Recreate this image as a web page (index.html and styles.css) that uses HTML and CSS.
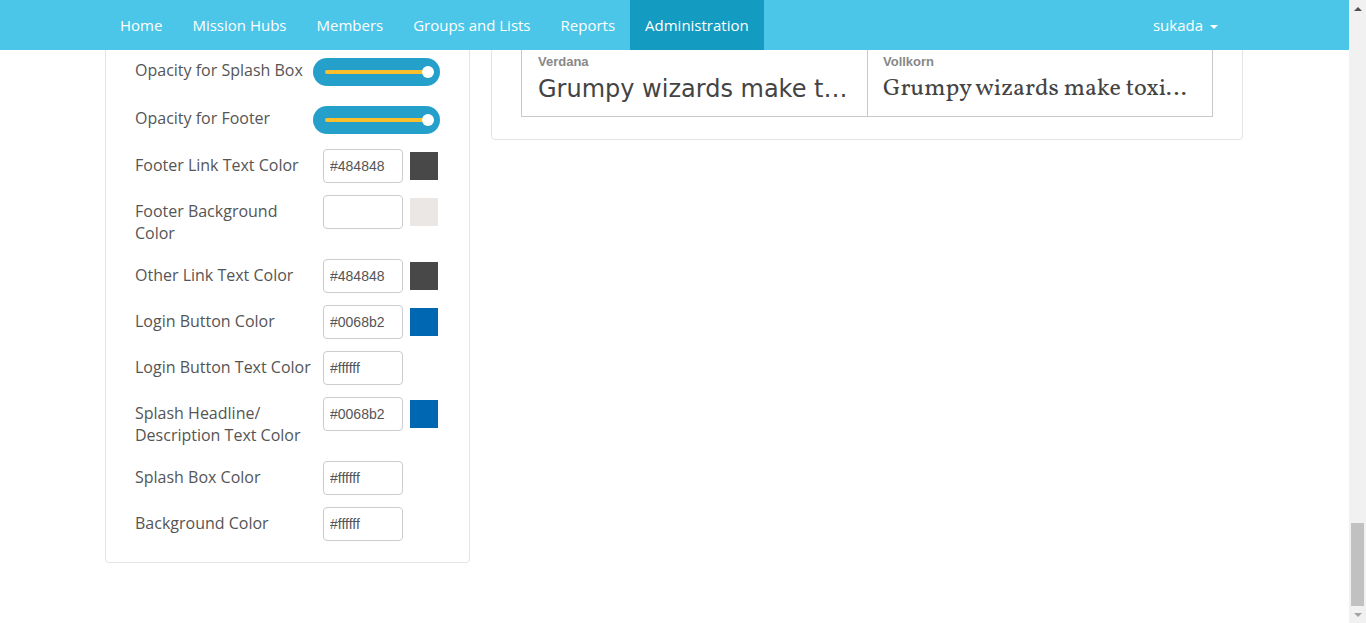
FILE: index.html
```html
<!DOCTYPE html>
<html lang="en">
<head>
<meta charset="utf-8">
<title>Administration</title>
<link rel="stylesheet" href="styles.css">
</head>
<body>
<div class="window">
  <div class="viewport">
    <nav class="navbar">
      <div class="nav-inner">
        <ul class="nav-links">
          <li><a href="#">Home</a></li>
          <li><a href="#">Mission Hubs</a></li>
          <li><a href="#">Members</a></li>
          <li><a href="#">Groups and Lists</a></li>
          <li><a href="#">Reports</a></li>
          <li class="active"><a href="#">Administration</a></li>
        </ul>
        <div class="nav-user"><a href="#">sukada<span class="caret"></span></a></div>
      </div>
    </nav>
    <main class="page">
      <div class="layout">
        <section class="panel panel-settings">
          <div class="settings-above"></div>
          <div class="sliders">
            <div class="slider-row">
              <span class="field-label field-label-inline">Opacity for Splash Box</span>
              <div class="slider" role="slider" aria-valuenow="100"><div class="slider-track"><span class="slider-thumb"></span></div></div>
            </div>
            <div class="slider-row">
              <span class="field-label field-label-inline">Opacity for Footer</span>
              <div class="slider" role="slider" aria-valuenow="100"><div class="slider-track"><span class="slider-thumb"></span></div></div>
            </div>
          </div>
          <div class="color-row">
            <label class="field-label">Footer Link Text Color</label>
            <input class="color-input" type="text" value="#484848">
            <span class="swatch" style="background:#484848"></span>
          </div>
          <div class="color-row">
            <label class="field-label">Footer Background Color</label>
            <input class="color-input" type="text" value="">
            <span class="swatch" style="background:#ebe7e4"></span>
          </div>
          <div class="color-row">
            <label class="field-label">Other Link Text Color</label>
            <input class="color-input" type="text" value="#484848">
            <span class="swatch" style="background:#484848"></span>
          </div>
          <div class="color-row">
            <label class="field-label">Login Button Color</label>
            <input class="color-input" type="text" value="#0068b2">
            <span class="swatch" style="background:#0068b2"></span>
          </div>
          <div class="color-row">
            <label class="field-label">Login Button Text Color</label>
            <input class="color-input" type="text" value="#ffffff">
            <span class="swatch" style="background:#ffffff"></span>
          </div>
          <div class="color-row">
            <label class="field-label">Splash Headline/<wbr>Description Text Color</label>
            <input class="color-input" type="text" value="#0068b2">
            <span class="swatch" style="background:#0068b2"></span>
          </div>
          <div class="color-row">
            <label class="field-label">Splash Box Color</label>
            <input class="color-input" type="text" value="#ffffff">
            <span class="swatch" style="background:#ffffff"></span>
          </div>
          <div class="color-row">
            <label class="field-label">Background Color</label>
            <input class="color-input" type="text" value="#ffffff">
            <span class="swatch" style="background:#ffffff"></span>
          </div>
        </section>
        <section class="panel panel-fonts">
          <div class="fonts-above"></div>
          <div class="font-card">
            <div class="font-cell">
              <div class="font-name">Verdana</div>
              <div class="font-sample sample-verdana">Grumpy wizards make toxic brew for the evil Queen and Jack.</div>
            </div>
            <div class="font-cell">
              <div class="font-name">Vollkorn</div>
              <div class="font-sample sample-vollkorn">Grumpy wizards make toxic brew for the evil Queen and Jack.</div>
            </div>
          </div>
        </section>
      </div>
    </main>
  </div>
  <div class="scrollbar" aria-hidden="true">
    <div class="sb-button"><span class="sb-arrow-up"></span></div>
    <div class="sb-track"><div class="sb-thumb"></div></div>
    <div class="sb-button"><span class="sb-arrow-down"></span></div>
  </div>
</div>
</body>
</html>
```
FILE: styles.css
```css
* { box-sizing: border-box; }
html, body { margin: 0; padding: 0; }
body {
  font-family: "Open Sans", "Liberation Sans", sans-serif;
  color: #555;
  background: #fff;
  overflow: hidden;
}

.window {
  display: flex;
  height: 100vh;
}
.viewport {
  position: relative;
  flex: 1;
  min-width: 0;
  height: 100%;
  overflow: hidden;
  display: flex;
  flex-direction: column;
  justify-content: flex-end;
}

/* scrollbar */
.scrollbar {
  width: 17px;
  flex: none;
  background: #f1f1f1;
  display: flex;
  flex-direction: column;
}
.sb-button {
  height: 17px;
  flex: none;
  display: flex;
  align-items: center;
  justify-content: center;
}
.sb-arrow-up {
  width: 0; height: 0;
  border-bottom: 4px solid #505050;
  border-left: 4px solid transparent;
  border-right: 4px solid transparent;
}
.sb-arrow-down {
  width: 0; height: 0;
  border-top: 4px solid #a3a3a3;
  border-left: 4px solid transparent;
  border-right: 4px solid transparent;
}
.sb-track {
  flex: 1;
  display: flex;
  flex-direction: column;
  justify-content: flex-end;
  padding: 0 2px;
}
.sb-thumb {
  height: 83px;
  background: #c1c1c1;
}

/* navbar */
.navbar {
  position: absolute;
  top: 0; left: 0; right: 0;
  height: 50px;
  background: #4bc6e8;
  z-index: 10;
}
.nav-inner {
  width: 1139px;
  margin: 0 auto;
  height: 50px;
  display: flex;
  justify-content: space-between;
}
.nav-links {
  list-style: none;
  margin: 0;
  padding: 0;
  display: flex;
}
.nav-links a,
.nav-user a {
  display: block;
  padding: 0 15px;
  line-height: 50px;
  font-size: 15px;
  color: #fff;
  text-decoration: none;
}
.nav-links .active a { background: #139bc1; }
.nav-user { margin-right: 11px; }
.caret {
  display: inline-block;
  width: 0; height: 0;
  margin-left: 7px;
  vertical-align: middle;
  border-top: 4px solid #fff;
  border-left: 4px solid transparent;
  border-right: 4px solid transparent;
}

/* page */
.page {
  flex: none;
  padding: 0 0 60px;
}
.layout {
  width: 1139px;
  margin: 0 auto;
  display: flex;
  align-items: flex-start;
  gap: 21px;
}
.panel {
  background: #fff;
  border: 1px solid #e4e4e4;
  border-radius: 4px;
}
.panel-settings {
  width: 365px;
  flex: none;
  padding: 0 29px 21px;
}
.panel-fonts {
  width: 752px;
  flex: none;
  padding: 0 29px 22px;
}
.settings-above { height: 120px; }
.fonts-above { height: 104px; }

/* sliders */
.sliders { margin-bottom: 15px; }
.slider-row {
  display: flex;
  align-items: center;
  height: 28px;
  margin-bottom: 20px;
}
.slider-row:last-child { margin-bottom: 0; }
.slider {
  width: 128px;
  height: 28px;
  border-radius: 14px;
  background: #24a0ca;
  padding: 0 12px;
  display: flex;
  align-items: center;
}
.slider-track {
  position: relative;
  flex: 1;
  height: 4px;
  margin-top: -1px;
  border-radius: 2px;
  background: #fbbf2d;
}
.slider-thumb {
  position: absolute;
  right: -6px;
  top: 50%;
  width: 12px;
  height: 12px;
  margin-top: -6px;
  border-radius: 50%;
  background: #fff;
}

/* colour rows */
.field-label {
  width: 178px;
  flex: none;
  font-size: 16px;
  line-height: 22px;
  padding: 5px 0 3px;
  color: #555;
}
.field-label-inline { padding: 0 0 5px; }
.color-row {
  display: flex;
  align-items: flex-start;
  min-height: 34px;
  margin-bottom: 12px;
}
.color-row:last-child { margin-bottom: 0; }
.color-input {
  margin: 0 0 0 10px;
  width: 80px;
  height: 34px;
  border: 1px solid #ccc;
  border-radius: 4px;
  padding: 0 6px;
  font-family: "Liberation Sans", Arial, sans-serif;
  font-size: 14px;
  color: #555;
  background: #fff;
}
.swatch {
  width: 28px;
  height: 28px;
  margin: 3px 0 0 7px;
  flex: none;
}

/* font card */
.font-card {
  display: flex;
  border: 1px solid #c8c8c8;
}
.font-cell {
  flex: 1;
  min-width: 0;
  padding: 10px 16px;
}
.font-cell + .font-cell {
  border-left: 1px solid #c8c8c8;
  padding-left: 15px;
}
.font-name {
  font-family: "Liberation Sans", Arial, sans-serif;
  font-weight: bold;
  font-size: 13px;
  line-height: 18px;
  margin-bottom: 1px;
  color: #888;
}
.font-sample {
  line-height: 34px;
  white-space: nowrap;
  overflow: hidden;
  text-overflow: ellipsis;
  color: #444;
}
.sample-verdana {
  font-family: Verdana, "DejaVu Sans", sans-serif;
  font-size: 24px;
}
.sample-vollkorn {
  font-family: Vollkorn, "DejaVu Serif", serif;
  font-size: 24px;
}
```
